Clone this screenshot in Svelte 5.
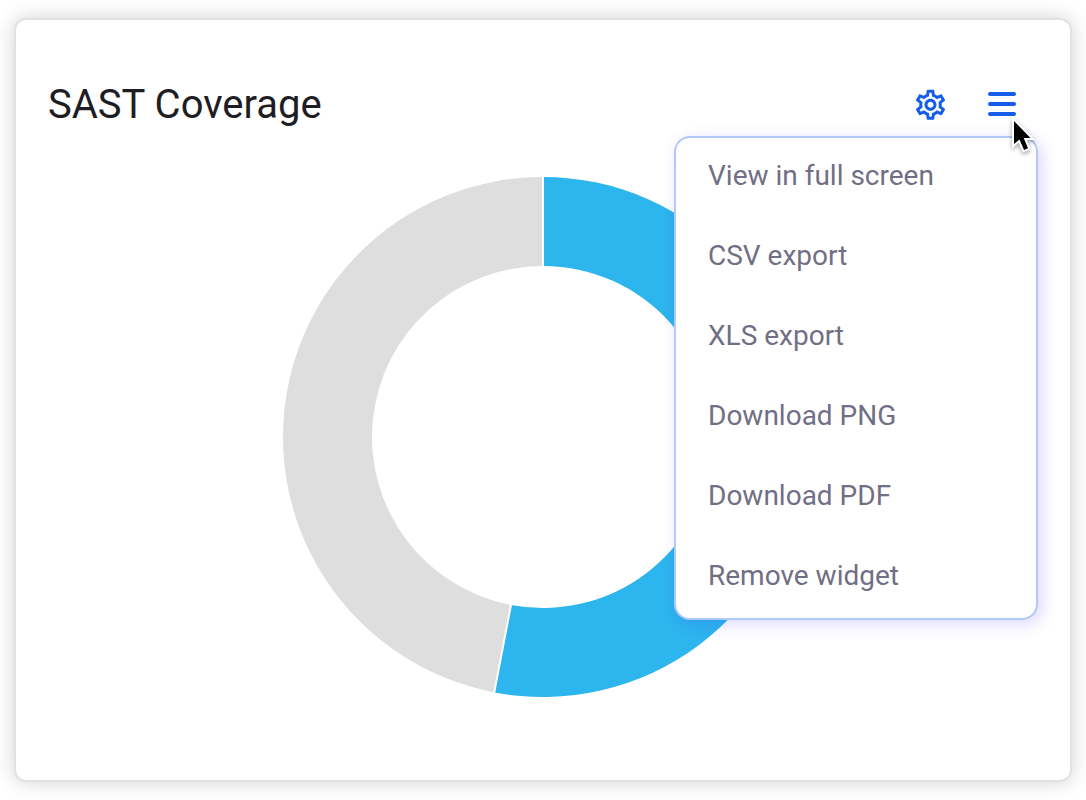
<script>
  const actions = ['View in full screen', 'CSV export', 'XLS export', 'Download PNG', 'Download PDF', 'Remove widget'];
  let open = $state(true);

  const covered = 0.53;
  const outer = 260;
  const inner = 171;

  function point(radius, share) {
    const a = share * Math.PI * 2;
    return `${260 + radius * Math.sin(a)} ${260 - radius * Math.cos(a)}`;
  }

  function slice(from, to) {
    const large = to - from > 0.5 ? 1 : 0;
    return `M${point(outer, from)}A${outer} ${outer} 0 ${large} 1 ${point(outer, to)}L${point(inner, to)}A${inner} ${inner} 0 ${large} 0 ${point(inner, from)}Z`;
  }
</script>

<main>
  <section class="card" aria-labelledby="title">
    <header>
      <h1 id="title">SAST Coverage</h1>
      <div class="tools">
        <button class="tool" type="button" aria-label="Settings">
          <svg class="gear" viewBox="0 0 24 24" aria-hidden="true">
            <path transform="translate(0.33 0.5)" d="M19.43 12.98c.04-.32.07-.64.07-.98 0-.34-.03-.66-.07-.98l2.11-1.65c.19-.15.24-.42.12-.64l-2-3.46c-.09-.16-.26-.25-.44-.25-.06 0-.12.01-.17.03l-2.49 1c-.52-.4-1.08-.73-1.69-.98l-.38-2.65C14.46 2.18 14.25 2 14 2h-4c-.25 0-.46.18-.49.42l-.38 2.65c-.61.25-1.17.59-1.69.98l-2.49-1c-.06-.02-.12-.03-.18-.03-.17 0-.34.09-.43.25l-2 3.46c-.13.22-.07.49.12.64l2.11 1.65c-.04.32-.07.65-.07.98 0 .33.03.66.07.98l-2.11 1.65c-.19.15-.24.42-.12.64l2 3.46c.09.16.26.25.44.25.06 0 .12-.01.17-.03l2.49-1c.52.4 1.08.73 1.69.98l.38 2.65c.03.24.24.42.49.42h4c.25 0 .46-.18.49-.42l.38-2.65c.61-.25 1.17-.59 1.69-.98l2.49 1c.06.02.12.03.18.03.17 0 .34-.09.43-.25l2-3.46c.12-.22.07-.49-.12-.64l-2.11-1.65zm-1.98-1.71c.04.31.05.52.05.73 0 .21-.02.43-.05.73l-.14 1.13.89.7 1.08.84-.7 1.21-1.27-.51-1.04-.42-.9.68c-.43.32-.84.56-1.25.73l-1.06.43-.16 1.13-.2 1.35h-1.4l-.19-1.35-.16-1.13-1.06-.43c-.43-.18-.83-.41-1.23-.71l-.91-.7-1.06.43-1.27.51-.7-1.21 1.08-.84.89-.7-.14-1.13c-.03-.31-.05-.54-.05-.74s.02-.43.05-.73l.14-1.13-.89-.7-1.08-.84.7-1.21 1.27.51 1.04.42.9-.68c.43-.32.84-.56 1.25-.73l1.06-.43.16-1.13.2-1.35h1.39l.19 1.35.16 1.13 1.06.43c.43.18.83.41 1.23.71l.91.7 1.06-.43 1.27-.51.7 1.21-1.07.85-.89.7.14 1.13zM12 8c-2.21 0-4 1.79-4 4s1.79 4 4 4 4-1.79 4-4-1.79-4-4-4zm0 6c-1.1 0-2-.9-2-2s.9-2 2-2 2 .9 2 2-.9 2-2 2z" />
          </svg>
        </button>
        <button class="tool" type="button" aria-label="Widget menu" aria-expanded={open} onclick={() => (open = !open)}>
          <svg class="bars" viewBox="0 0 28 24" aria-hidden="true">
            <path d="M2 2H26M2 12H26M2 22H26" />
          </svg>
        </button>
        {#if open}
          <ul class="menu">
            {#each actions as action}
              <li><button type="button">{action}</button></li>
            {/each}
          </ul>
        {/if}
        <svg class="pointer" viewBox="0 0 26 40" aria-hidden="true">
          <path d="M2 4V27L7.500 22.500L12 33L16 31.300L11.700 21H18.500Z" />
        </svg>
      </div>
    </header>
    <svg class="chart" viewBox="0 0 520 520" role="img" aria-label="Coverage donut chart">
      <path class="covered" d={slice(0, covered)} />
      <path class="rest" d={slice(covered, 1)} />
      <path class="gap" d={`M${point(inner - 1, 0)}L${point(outer, 0)}M${point(inner - 1, covered)}L${point(outer + 1, covered)}`} />
    </svg>
  </section>
</main>

<style>
  :global(body) {
    margin: 0;
    background: #fff;
    font-family: Roboto, "Liberation Sans", sans-serif;
  }

  main {
    padding: 18px 14px;
  }

  .card {
    padding: 52px 32px 83px;
    border: 2px solid #e1e1e7;
    border-radius: 12px;
    background: #fff;
    box-shadow: 0 0 20px rgba(0, 0, 0, 0.18);
  }

  header {
    display: flex;
    align-items: center;
    justify-content: space-between;
    min-height: 64px;
  }

  h1 {
    margin: 0;
    padding-top: 2px;
    color: #1e1d24;
    font-size: 40px;
    font-weight: 400;
    line-height: 48px;
  }

  .tools {
    position: relative;
    display: flex;
  }

  button {
    margin: 0;
    border: 0;
    background: none;
    font: inherit;
    cursor: pointer;
  }

  .tool {
    display: flex;
    align-items: center;
    justify-content: center;
    width: 72px;
    height: 64px;
    padding: 0;
  }

  .gear {
    width: 36px;
    height: 36px;
    fill: #145deb;
  }

  .bars {
    width: 28px;
    height: 24px;
    fill: none;
    stroke: #145deb;
    stroke-width: 4;
    stroke-linecap: round;
  }

  .menu {
    position: absolute;
    top: 100%;
    right: 0;
    width: 360px;
    margin: 0;
    padding: 0;
    border: 2px solid #b0c8fa;
    border-radius: 16px;
    background: #fff;
    box-shadow: 4px 4px 16px rgba(60, 40, 240, 0.18);
    list-style: none;
  }

  .menu button {
    display: block;
    width: 100%;
    padding: 18px 32px 22px;
    color: #716f85;
    font-size: 28px;
    line-height: 40px;
    text-align: left;
  }

  .pointer {
    position: absolute;
    top: 45px;
    right: 0;
    width: 26px;
    height: 40px;
    overflow: visible;
    fill: #000;
    stroke: #fff;
    stroke-width: 4;
    paint-order: stroke;
    filter: drop-shadow(0 2px 2px rgba(0, 0, 0, 0.35));
    pointer-events: none;
  }

  .chart {
    display: block;
    width: 100%;
    max-width: 520px;
    margin: 41px auto 0;
  }

  .covered {
    fill: #2db5ee;
  }

  .rest {
    fill: #dedede;
  }

  .gap {
    stroke: #fff;
    stroke-width: 2;
  }
</style>
